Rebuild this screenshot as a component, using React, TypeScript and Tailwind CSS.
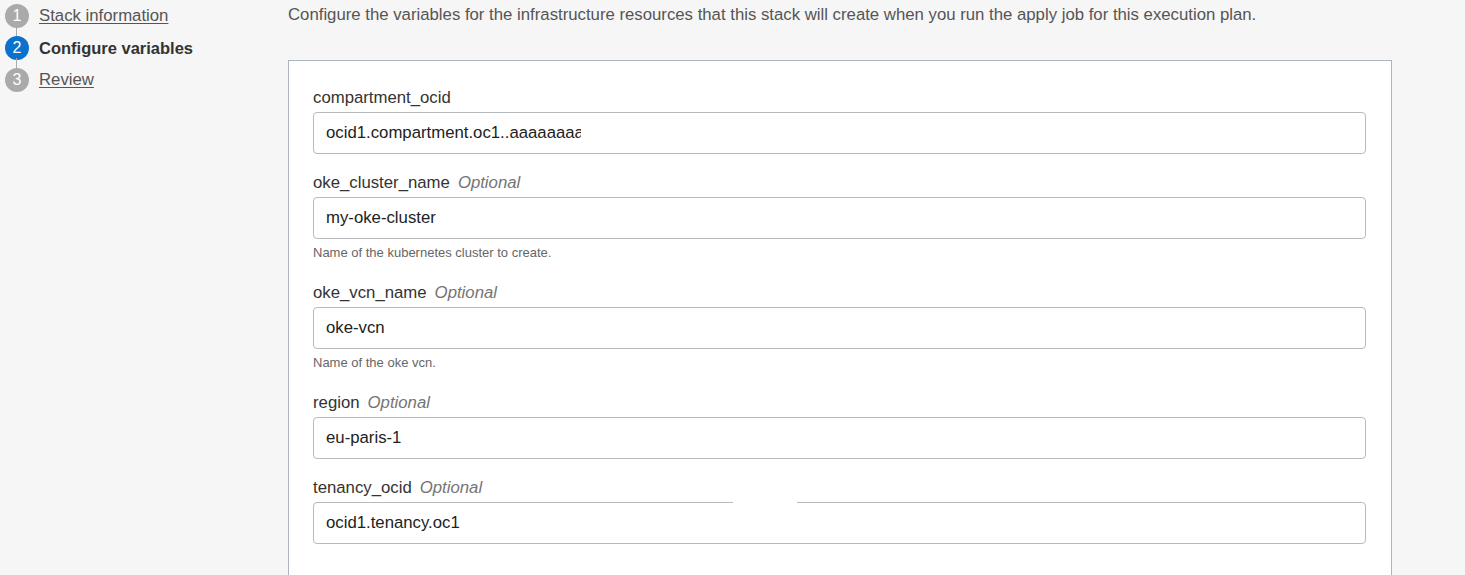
import React from "react";

type Field = {
  name: string;
  value: string;
  optional?: boolean;
  help?: string;
  clip?: number;
  gap?: boolean;
};

const fields: Field[] = [
  { name: "compartment_ocid", value: "ocid1.compartment.oc1..aaaaaaaa", clip: 255 },
  {
    name: "oke_cluster_name",
    value: "my-oke-cluster",
    optional: true,
    help: "Name of the kubernetes cluster to create.",
  },
  { name: "oke_vcn_name", value: "oke-vcn", optional: true, help: "Name of the oke vcn." },
  { name: "region", value: "eu-paris-1", optional: true },
  { name: "tenancy_ocid", value: "ocid1.tenancy.oc1", optional: true, gap: true },
];

const steps = [
  { n: 1, label: "Stack information", active: false },
  { n: 2, label: "Configure variables", active: true },
  { n: 3, label: "Review", active: false },
];

function Steps() {
  return (
    <nav className="w-[288px] shrink-0 pl-[5px] pt-[4px]">
      {steps.map((step, i) => (
        <div key={step.n} className="relative flex h-[32px] items-start">
          {i < steps.length - 1 && (
            <span className="absolute left-[11px] top-[22px] h-[12px] w-px bg-[#a9a9a9]" />
          )}
          <span
            className={
              step.active
                ? "flex h-[24px] w-[24px] items-center justify-center rounded-full bg-[#0a72cc] text-[16px] text-white"
                : "flex h-[24px] w-[24px] items-center justify-center rounded-full bg-[#aaaaaa] text-[16px] text-white"
            }
          >
            {step.n}
          </span>
          <span
            className={
              step.active
                ? "ml-[10px] text-[16.5px] font-bold leading-[24px] text-[#333333]"
                : "ml-[10px] text-[16.75px] leading-[24px] text-[#555555] underline underline-offset-2"
            }
          >
            {step.label}
          </span>
        </div>
      ))}
    </nav>
  );
}

function VariableField({ field }: { field: Field }) {
  return (
    <div className="flex flex-col">
      <label className="text-[16.75px] leading-5 text-[#333333]">
        {field.name}
        {field.optional && <span className="ml-[8px] italic text-[#757575]">Optional</span>}
      </label>
      <div className="relative mt-1 flex h-[42px] items-center rounded-[4px] border border-[#b7babf] bg-white px-[12px] text-[16.75px] text-[#222222]">
        {field.clip ? (
          <span className="block overflow-hidden whitespace-nowrap" style={{ width: field.clip }}>
            {field.value}
          </span>
        ) : (
          field.value
        )}
        {field.gap && <span className="absolute left-[419px] top-[-1px] h-[3px] w-[64px] bg-white" />}
      </div>
      {field.help && (
        <p className="mt-[6px] mb-[3px] text-[13px] leading-4 text-[#666666]">{field.help}</p>
      )}
    </div>
  );
}

export default function App() {
  return (
    <div className="flex h-[575px] overflow-hidden bg-[#f6f6f6] font-['Liberation_Sans',Arial,sans-serif]">
      <Steps />
      <main className="w-[1104px] pt-[5px]">
        <p className="text-[16.75px] leading-5 text-[#555555]">
          Configure the variables for the infrastructure resources that this stack will create when you run the apply job for this execution plan.
        </p>
        <section className="mt-[35px] flex min-h-[600px] flex-col gap-[19px] border border-[#aeb4bb] bg-white pl-[24px] pr-[25px] pt-[27px]">
          {fields.map((field) => (
            <VariableField key={field.name} field={field} />
          ))}
        </section>
      </main>
    </div>
  );
}
